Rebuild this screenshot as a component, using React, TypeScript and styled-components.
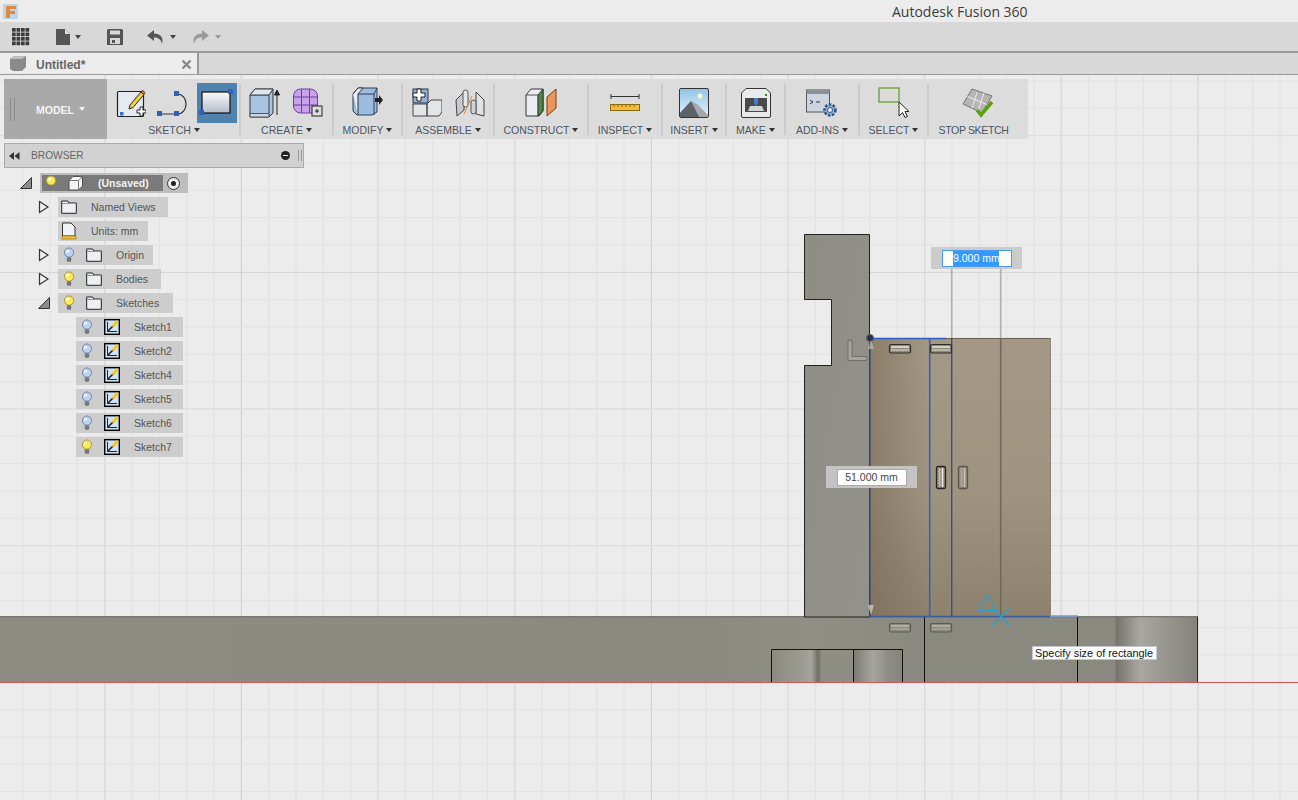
import React from 'react';
import styled, { createGlobalStyle } from 'styled-components';

const GlobalStyle = createGlobalStyle`
  html, body { margin: 0; padding: 0; background: #ececec; overflow: hidden; }
  body { font-family: "Liberation Sans", Arial, sans-serif; }
`;

const Page = styled.div`
  width: 1298px;
  height: 800px;
  display: flex;
  flex-direction: column;
  overflow: hidden;
`;

const TitleBar = styled.div`
  height: 22px;
  flex: none;
  background: #ececec;
  display: flex;
  align-items: center;
  padding-left: 3px;
`;

const AppTitle = styled.div`
  margin-left: 874px;
  font-family: "Open Sans", sans-serif;
  font-size: 14px;
  color: #3c3c3c;
  white-space: nowrap;
`;

const QuickBar = styled.div`
  height: 29px;
  flex: none;
  background: #d8d8d8;
  border-bottom: 2px solid #999;
  display: flex;
  align-items: center;
`;

const QuickItem = styled.div<{ $w: number; $ml: number; $gap?: number }>`
  width: ${(p) => p.$w}px;
  margin-left: ${(p) => p.$ml}px;
  height: 20px;
  display: flex;
  align-items: center;
  gap: ${(p) => p.$gap || 0}px;
`;

const Caret = styled.span<{ $c?: string }>`
  display: inline-block;
  width: 0;
  height: 0;
  border-left: 3.5px solid transparent;
  border-right: 3.5px solid transparent;
  border-top: 4px solid ${(p) => p.$c || '#444'};
`;

const TabBar = styled.div`
  height: 21px;
  flex: none;
  display: flex;
  background: #d8d8d8;
  border-bottom: 1px solid #999;
`;

const Tab = styled.div`
  width: 199px;
  background: #ececec;
  border-right: 2px solid #999;
  display: flex;
  align-items: center;
  padding: 0 5px 0 10px;
  box-sizing: border-box;
  font-size: 12px;
  font-weight: bold;
  color: #666;
`;

const TabLabel = styled.span`
  margin: 3px 0 0 10px;
  flex: 1;
`;

const TabClose = styled.svg`
  margin-top: 2px;
`;

const Viewport = styled.div`
  position: relative;
  flex: 1;
  background: #ececec;
`;

const Scene = styled.svg`
  position: absolute;
  left: 0;
  top: -75px;
  width: 1298px;
  height: 800px;
`;

const Toolbar = styled.div`
  position: absolute;
  left: 4px;
  top: 4px;
  width: 1024px;
  height: 60px;
  background: #dcdcdc;
  display: flex;
`;

const ModelButton = styled.div`
  width: 103px;
  flex: none;
  background: #a9a9a9;
  display: flex;
  align-items: center;
  color: #f4f4f4;
  font-size: 10.5px;
  font-weight: bold;
  gap: 5px;
`;

const ModelText = styled.span`
  margin-top: 2px;
`;

const Grip = styled.div`
  width: 3px;
  height: 23px;
  margin: 0 16px 0 6px;
  border-left: 1px solid #8c8c8c;
  border-right: 1px solid #8c8c8c;
`;

const ToolGroup = styled.div<{ $w: number; $last?: boolean; $flush?: boolean }>`
  width: ${(p) => p.$w}px;
  flex: none;
  box-sizing: border-box;
  padding-right: ${(p) => (p.$flush ? 0 : 2)}px;
  position: relative;
  display: flex;
  flex-direction: column;
  align-items: center;
  &::after {
    content: '';
    display: ${(p) => (p.$last ? 'none' : 'block')};
    position: absolute;
    right: 0;
    top: 5px;
    bottom: 4px;
    width: 2px;
    background: #cbcbcb;
  }
`;

const ToolIcons = styled.div`
  height: 44px;
  display: flex;
  align-items: center;
  justify-content: center;
  gap: 3px;
`;

const ToolSlot = styled.div<{ $on?: boolean }>`
  width: 40px;
  height: 40px;
  margin-top: 4px;
  display: flex;
  align-items: center;
  justify-content: center;
  background: ${(p) => (p.$on ? '#4f83ae' : 'transparent')};
`;

const ToolLabel = styled.div<{ $last?: boolean }>`
  font-size: 10.5px;
  line-height: 12px;
  margin: 1px ${(p) => (p.$last ? 8 : 0)}px 0 0;
  letter-spacing: ${(p) => (p.$last ? -0.35 : 0)}px;
  color: #4d5563;
  display: flex;
  align-items: center;
  gap: 3px;
  white-space: nowrap;
`;

const BrowserBar = styled.div`
  position: absolute;
  left: 4px;
  top: 68px;
  width: 300px;
  height: 25px;
  box-sizing: border-box;
  background: #d2d2d2;
  border: 1px solid #aaa;
  display: flex;
  align-items: center;
  padding: 0 1px 0 4px;
  font-size: 10.2px;
  color: #666;
`;

const BrowserTitle = styled.span`
  flex: 1;
  margin-left: 11px;
`;

const MinusDot = styled.span`
  width: 9px;
  height: 9px;
  border-radius: 50%;
  background: #222;
  display: flex;
  align-items: center;
  justify-content: center;
  margin-right: 8px;
  &::after {
    content: '';
    width: 5px;
    height: 1.5px;
    background: #eee;
  }
`;

const BarGrip = styled.span`
  width: 2px;
  height: 11px;
  border-left: 1px solid #999;
  border-right: 1px solid #999;
`;

const Tree = styled.div`
  position: absolute;
  left: 20px;
  top: 98px;
  display: flex;
  flex-direction: column;
  gap: 4px;
`;

const TreeRow = styled.div<{ $indent: number }>`
  height: 20px;
  display: flex;
  align-items: center;
  margin-left: ${(p) => p.$indent}px;
`;

const Twisty = styled.div`
  width: 20px;
  height: 20px;
  flex: none;
  display: flex;
  align-items: center;
  justify-content: flex-start;
`;

const Chip = styled.div<{ $w: number }>`
  width: ${(p) => p.$w}px;
  height: 20px;
  background: #cdcdcd;
  display: flex;
  align-items: center;
  box-sizing: border-box;
  padding-left: 3px;
  font-size: 10.5px;
  color: #555;
`;

const Gap = styled.span<{ $w: number }>`
  width: ${(p) => p.$w}px;
  flex: none;
`;

const ChipText = styled.span<{ $ml: number }>`
  margin-left: ${(p) => p.$ml}px;
  white-space: nowrap;
`;

const RootName = styled.div`
  width: 121px;
  height: 16px;
  background: #7a7a7a;
  display: flex;
  align-items: center;
  padding-left: 3px;
  box-sizing: border-box;
  color: #f2f2f2;
  font-size: 10.5px;
  font-weight: bold;
`;

const RootChip = styled.div`
  height: 20px;
  width: 148px;
  background: #bdbdbd;
  display: flex;
  align-items: center;
  padding-left: 2px;
  box-sizing: border-box;
`;

const RadioDot = styled.span`
  width: 13px;
  height: 13px;
  border-radius: 50%;
  border: 1px solid #333;
  background: #eee;
  box-sizing: border-box;
  margin-left: 4px;
  display: flex;
  align-items: center;
  justify-content: center;
  &::after {
    content: '';
    width: 5px;
    height: 5px;
    border-radius: 50%;
    background: #222;
  }
`;

const DimBox = styled.div<{ $x: number; $y: number }>`
  position: absolute;
  left: ${(p) => p.$x}px;
  top: ${(p) => p.$y}px;
  width: 91px;
  height: 22px;
  background: rgba(200, 200, 200, 0.93);
  display: flex;
  align-items: center;
  justify-content: center;
`;

const DimInput = styled.div<{ $active?: boolean }>`
  width: 70px;
  height: 17px;
  box-sizing: border-box;
  background: #fff;
  border: 1px solid ${(p) => (p.$active ? '#4a9bf0' : '#aaa')};
  font-size: 10.5px;
  line-height: 15px;
  color: #444;
  text-align: center;
  display: flex;
  justify-content: center;
`;

const Selected = styled.span`
  background: #3399ff;
  color: #fff;
  width: 46px;
  margin-right: 1px;
  white-space: nowrap;
`;

const Tooltip = styled.div`
  position: absolute;
  left: 1032px;
  top: 571px;
  width: 125px;
  height: 14px;
  box-sizing: border-box;
  background: #fff;
  border: 1px solid #c4c4d0;
  font-size: 10.9px;
  line-height: 12px;
  padding-left: 2px;
  color: #111;
  white-space: nowrap;
`;

const xs = Array.from({ length: 48 }, (_, i) => 22.7 + i * 27.333);
const ys = Array.from({ length: 27 }, (_, i) => 81 + i * 27.333);

function GridLines() {
  return (
    <g>
      {xs.map((x, i) => {
        const strong = i === 8 || i === 23 || i === 43;
        const mid = (i - 8) % 5 === 0;
        return (
          <line
            key={i}
            x1={x}
            x2={x}
            y1={75}
            y2={800}
            stroke={strong ? '#cecece' : mid ? '#dadada' : '#e1e1e1'}
            strokeWidth={mid && !strong ? 1.4 : 1}
          />
        );
      })}
      {ys.map((y, i) => {
        const strong = (i - 7) % 15 === 0;
        const mid = (i - 7) % 5 === 0;
        return (
          <line
            key={i}
            y1={y}
            y2={y}
            x1={0}
            x2={1298}
            stroke={strong ? '#d2d2d2' : mid ? '#dedede' : '#e2e2e2'}
            strokeWidth={mid && !strong ? 1.4 : 1}
          />
        );
      })}
    </g>
  );
}

function HorizConstraint({ x, y, dim }: { x: number; y: number; dim?: boolean }) {
  return (
    <g transform={`translate(${x} ${y})`} opacity={dim ? 0.5 : 1}>
      <rect x={0.5} y={0.5} width={21} height={8.5} rx={1.5} fill="#8f8a7c" stroke="#2f2c26" strokeWidth={1.2} />
      <line x1={2} y1={3} x2={20} y2={3} stroke="#f0eee8" strokeWidth={1.4} />
      <path d="M2 7l1.5-2 1.5 2 1.5-2 1.5 2 1.5-2 1.5 2 1.5-2 1.5 2 1.5-2 1.5 2 1.5-2 1.5 2" stroke="#e6e3da" fill="none" strokeWidth={0.8} />
    </g>
  );
}

function VertConstraint({ x, y, dim }: { x: number; y: number; dim?: boolean }) {
  return (
    <g transform={`translate(${x} ${y})`} opacity={dim ? 0.55 : 1}>
      <rect x={0.5} y={0.5} width={9} height={22} rx={1.5} fill="#8f8a7c" stroke="#26241f" strokeWidth={1.3} />
      <line x1={6.5} y1={2} x2={6.5} y2={21} stroke="#f0eee8" strokeWidth={1.4} />
      <path d="M2.5 2.5l2 1.5-2 1.5 2 1.5-2 1.5 2 1.5-2 1.5 2 1.5-2 1.5 2 1.5-2 1.5 2 1.5-2 1.5" stroke="#e6e3da" fill="none" strokeWidth={0.8} />
    </g>
  );
}

function Model() {
  return (
    <g>
      <defs>
        <linearGradient id="tall" x1="0" y1="0" x2="1" y2="1">
          <stop offset="0" stopColor="#8f8e85" />
          <stop offset="1" stopColor="#92918b" />
        </linearGradient>
        <linearGradient id="cylA" x1="0" y1="0" x2="1" y2="0">
          <stop offset="0" stopColor="#8c8a80" />
          <stop offset="0.55" stopColor="#9a9a90" />
          <stop offset="0.8" stopColor="#a4a49c" />
          <stop offset="0.93" stopColor="#6f6f68" />
          <stop offset="1" stopColor="#8b897f" />
        </linearGradient>
        <linearGradient id="cylB" x1="0" y1="0" x2="1" y2="0">
          <stop offset="0" stopColor="#7c7b73" />
          <stop offset="0.4" stopColor="#a6a69e" />
          <stop offset="0.7" stopColor="#8f8e86" />
          <stop offset="1" stopColor="#85847b" />
        </linearGradient>
        <linearGradient id="cylC" x1="0" y1="0" x2="1" y2="0">
          <stop offset="0" stopColor="#74736b" />
          <stop offset="0.3" stopColor="#a8a8a0" />
          <stop offset="0.55" stopColor="#9a9a92" />
          <stop offset="1" stopColor="#84837a" />
        </linearGradient>
        <linearGradient id="baseFade" x1="0" y1="0" x2="1" y2="0">
          <stop offset="0" stopColor="#8d8b81" />
          <stop offset="0.6" stopColor="#8c8a80" />
          <stop offset="0.68" stopColor="#908f86" />
          <stop offset="0.78" stopColor="#8a897f" />
          <stop offset="1" stopColor="#8b8a81" />
        </linearGradient>
        <linearGradient id="brown" x1="0" y1="0" x2="0" y2="1">
          <stop offset="0" stopColor="#9e937f" />
          <stop offset="0.55" stopColor="#998e79" />
          <stop offset="1" stopColor="#877b66" />
        </linearGradient>
        <linearGradient id="brownLeft" x1="0" y1="0" x2="1" y2="0">
          <stop offset="0" stopColor="#6f5f4a" stopOpacity="0.45" />
          <stop offset="1" stopColor="#6f5f4a" stopOpacity="0" />
        </linearGradient>
      </defs>
      <rect x={0} y={617} width={1198} height={65.5} fill="url(#baseFade)" />
      <rect x={1115.5} y={617} width={82} height={65} fill="url(#cylC)" />
      <rect x={771.5} y={649.5} width={50} height={33} fill="url(#cylA)" />
      <rect x={821.5} y={649.5} width={32} height={33} fill="#8f8e85" />
      <rect x={853.5} y={649.5} width={49} height={33} fill="url(#cylB)" />
      <line x1={0} y1={616.7} x2={1198} y2={616.7} stroke="#5e5d55" />
      <line x1={1197.5} y1={617} x2={1197.5} y2={682} stroke="#2a2a28" />
      <line x1={924.5} y1={617} x2={924.5} y2={682} stroke="#111" />
      <line x1={1077.5} y1={617} x2={1077.5} y2={682} stroke="#111" />
      <path d="M771.5 682V649.5H902.5V682M853.5 649.5V682" fill="none" stroke="#111" />
      <polygon
        points="804.5,234.5 869.5,234.5 869.5,617 804.5,617 804.5,365.5 831.5,365.5 831.5,299.5 804.5,299.5"
        fill="url(#tall)"
        stroke="#222"
      />
      <rect x={870} y={338} width={180.5} height={279} fill="url(#brown)" opacity={0.94} />
      <rect x={870} y={338} width={60} height={279} fill="url(#brownLeft)" />
      <line x1={870} y1={338.5} x2={1050} y2={338.5} stroke="#6a614f" />
      <line x1={1050.5} y1={338} x2={1050.5} y2={617} stroke="#8d8471" />
      <line x1={951.7} y1={268} x2={951.7} y2={338} stroke="#b0b0b0" strokeWidth={1.6} />
      <line x1={1000.7} y1={268} x2={1000.7} y2={338} stroke="#b0b0b0" strokeWidth={1.6} />
      <line x1={1000.7} y1={338} x2={1000.7} y2={617} stroke="#6f695c" strokeWidth={1.6} />
      <line x1={951.7} y1={338} x2={951.7} y2={617} stroke="#3d4f73" strokeWidth={1.4} />
      <line x1={929.7} y1={338} x2={929.7} y2={617} stroke="#3a5fb8" strokeWidth={1.6} />
      <line x1={870} y1={338} x2={870} y2={617} stroke="#3f5378" strokeWidth={1.4} />
      <line x1={870} y1={338.5} x2={946} y2={338.5} stroke="#2f5fc4" strokeWidth={1.6} />
      <line x1={870} y1={616.5} x2={1050} y2={616.5} stroke="#3d5a9c" strokeWidth={1.4} />
      <line x1={1050} y1={616} x2={1078} y2={616} stroke="#7f9fe0" strokeWidth={1.6} />
      <circle cx={870} cy={338} r={3.6} fill="#26324a" stroke="#666" strokeWidth={1} />
      <polygon points="868,349 874,349 871,340" fill="#c9c6bd" opacity={0.6} />
      <polygon points="868,605 874,605 871,615" fill="#c9c6bd" opacity={0.8} />
      <path d="M850 342V358.5H865" fill="none" stroke="#6f6e67" strokeWidth={5} strokeLinecap="round" />
      <path d="M850 342V358.5H865" fill="none" stroke="#a5a49d" strokeWidth={3} strokeLinecap="round" />
      <HorizConstraint x={889} y={344} />
      <HorizConstraint x={930} y={344} />
      <HorizConstraint x={889} y={623} dim />
      <HorizConstraint x={930} y={623} dim />
      <VertConstraint x={936} y={466} />
      <VertConstraint x={958} y={466} dim />
      <polygon points="987.5,594.5 978.5,610.3 996.5,610.3" fill="none" stroke="#2a9fd0" strokeWidth={1.2} />
      <path d="M992 625.5L1010 608M992 608.5L1010 625.5" stroke="#2a9fd0" strokeWidth={1.2} />
      <line x1={0} y1={682.5} x2={1298} y2={682.5} stroke="#d05a5a" />
    </g>
  );
}

function Bulb({ color = 'yellow' }: { color?: 'yellow' | 'blue' }) {
  const fill = color === 'yellow' ? '#fde94c' : '#bcd2f3';
  const rim = color === 'yellow' ? '#a89a40' : '#6f86aa';
  return (
    <svg width="12" height="16" viewBox="0 0 12 16">
      <circle cx="6" cy="5.6" r="4.6" fill={fill} stroke={rim} />
      <circle cx="4.6" cy="4.2" r="1.6" fill="#fff" opacity="0.75" />
      <rect x="3.8" y="10.2" width="4.4" height="4.6" rx="1" fill="#777" />
    </svg>
  );
}

function Folder() {
  return (
    <svg width="16" height="14" viewBox="0 0 16 14">
      <path d="M.7 13.3V1h6l1.2 2h7.4v10.3z" fill="#eef0f4" stroke="#222" strokeWidth="1" />
      <line x1="1" y1="3.5" x2="15" y2="3.5" stroke="#999" />
    </svg>
  );
}

function SketchBadge() {
  return (
    <svg width="16" height="16" viewBox="0 0 16 16">
      <rect x=".7" y=".7" width="14.6" height="14.6" fill="#cfe2f5" stroke="#000" strokeWidth="1.4" />
      <path d="M3.5 3v9.5h9.5" fill="none" stroke="#222" strokeWidth="1" />
      <path d="M4 12L10 6" stroke="#222" strokeWidth="1.6" />
      <path d="M8.5 7.5L14 2" stroke="#f7c70e" strokeWidth="2.6" />
    </svg>
  );
}

function TriOpen() {
  return (
    <svg width="12" height="14" viewBox="0 0 12 14">
      <path d="M1.5 1.5L10 7l-8.5 5.5z" fill="#efefef" stroke="#333" strokeWidth="1.2" />
    </svg>
  );
}

function TriDown() {
  return (
    <svg width="12" height="12" viewBox="0 0 12 12">
      <polygon points="11.5,.5 11.5,11.5 .5,11.5" fill="#8c8c8c" stroke="#333" strokeWidth="1" />
    </svg>
  );
}

const sketchNames = ['Sketch1', 'Sketch2', 'Sketch4', 'Sketch5', 'Sketch6', 'Sketch7'];

function BrowserTree() {
  return (
    <Tree>
      <TreeRow $indent={0}>
        <Twisty><TriDown /></Twisty>
        <RootChip>
          <RootName>
            <Bulb />
            <Gap $w={11} />
            <svg width="16" height="16" viewBox="0 0 16 16">
              <path d="M1 5.5L5 1.5h9.5v9.5l-4 4H1z" fill="#f4f4f4" stroke="#555" />
              <path d="M1 5.5h9.5v9.5M10.5 5.5l4-4" fill="none" stroke="#777" />
            </svg>
            <ChipText $ml={14}>(Unsaved)</ChipText>
          </RootName>
          <RadioDot />
        </RootChip>
      </TreeRow>
      <TreeRow $indent={18}>
        <Twisty><TriOpen /></Twisty>
        <Chip $w={110}>
          <Folder />
          <ChipText $ml={14}>Named Views</ChipText>
        </Chip>
      </TreeRow>
      <TreeRow $indent={38}>
        <Chip $w={90}>
          <svg width="16" height="18" viewBox="0 0 16 18">
            <path d="M1.5 14V1h8.5l4 4v9z" fill="#f0f2f5" stroke="#333" />
            <rect x="1" y="14" width="14" height="3" fill="#f2bf3a" stroke="#8a6a10" strokeWidth=".6" />
          </svg>
          <ChipText $ml={14}>Units: mm</ChipText>
        </Chip>
      </TreeRow>
      {[
        { name: 'Origin', w: 95, bulb: 'blue' as const, tw: <TriOpen /> },
        { name: 'Bodies', w: 103, bulb: 'yellow' as const, tw: <TriOpen /> },
        { name: 'Sketches', w: 115, bulb: 'yellow' as const, tw: <TriDown /> },
      ].map((r) => (
        <TreeRow key={r.name} $indent={18}>
          <Twisty>{r.tw}</Twisty>
          <Chip $w={r.w}>
            <Gap $w={2} />
            <Bulb color={r.bulb} />
            <Gap $w={11} />
            <Folder />
            <ChipText $ml={14}>{r.name}</ChipText>
          </Chip>
        </TreeRow>
      ))}
      {sketchNames.map((name, i) => (
        <TreeRow key={name} $indent={56}>
          <Chip $w={107}>
            <Gap $w={2} />
            <Bulb color={i === 5 ? 'yellow' : 'blue'} />
            <Gap $w={11} />
            <SketchBadge />
            <ChipText $ml={14}>{name}</ChipText>
          </Chip>
        </TreeRow>
      ))}
    </Tree>
  );
}

const NewSketchIcon = () => (
  <svg width="30" height="32" viewBox="0 0 30 32">
    <rect x="1.5" y="4.5" width="26" height="25" rx="1" fill="#e6eaf1" stroke="#222" strokeWidth="1.2" />
    <rect x="4" y="25" width="3.5" height="3.5" fill="#3f6fc0" />
    <path d="M14 18l11-13 3 2.5-11 13-4 1.5z" fill="#f6cf3c" stroke="#222" />
    <path d="M25 5l3 2.5 1-2L26.5 3z" fill="#e0704a" stroke="#222" strokeWidth=".6" />
    <path d="M21 23h3v-3h3v3h3v3h-3v3h-3v-3h-3z" fill="#fff" stroke="#222" />
  </svg>
);

const CurveIcon = () => (
  <svg width="34" height="30" viewBox="0 0 34 30">
    <path d="M3 26H20M20 26C32 26 32 6 20 6" fill="none" stroke="#333" strokeWidth="1.2" />
    <rect x="0" y="23" width="5" height="5" fill="#2e62b8" />
    <rect x="17" y="23" width="5" height="5" fill="#2e62b8" />
    <rect x="17" y="3" width="5" height="5" fill="#2e62b8" />
  </svg>
);

const RectIcon = () => (
  <svg width="36" height="30" viewBox="0 0 36 30">
    <defs>
      <linearGradient id="rectG" x1="0" y1="0" x2="0" y2="1">
        <stop offset="0" stopColor="#fafafa" />
        <stop offset="1" stopColor="#b4bcc9" />
      </linearGradient>
    </defs>
    <rect x="3" y="4" width="28" height="21" fill="url(#rectG)" stroke="#111" strokeWidth="1.2" />
    <rect x="0" y="22" width="5" height="5" fill="#2e62b8" />
    <rect x="29" y="1" width="5" height="5" fill="#2e62b8" />
  </svg>
);

const ExtrudeIcon = () => (
  <svg width="32" height="32" viewBox="0 0 32 32">
    <path d="M1 8L6 2H24V26L20 30H1z" fill="#a9c4e2" stroke="#333" />
    <path d="M1 8H20V30M20 8L24 2" fill="none" stroke="#444" />
    <path d="M1 8L6 2H24L20 8z" fill="#dce7f3" stroke="#444" />
    <path d="M1 26.5H20V30H1z" fill="#cfd6df" stroke="#555" />
    <path d="M28 28V5M25.5 8L28 3l2.5 5z" stroke="#222" fill="#222" />
  </svg>
);

const FormIcon = () => (
  <svg width="32" height="32" viewBox="0 0 32 32">
    <rect x="1.5" y="2" width="24" height="24" rx="7" fill="#c9a3ea" stroke="#6a3fa0" />
    <path d="M1.5 10h24M1.5 18h24M9.5 2v24M17.5 2v24" stroke="#6a3fa0" fill="none" />
    <rect x="20" y="19" width="10" height="10" fill="#ddd" stroke="#222" />
    <path d="M23 24h4M25 22v4" stroke="#222" />
  </svg>
);

const ModifyIcon = () => (
  <svg width="32" height="32" viewBox="0 0 32 32">
    <path d="M1 7L6 1H25V25L20 28H5L1 24z" fill="#9dbde0" stroke="#2f3f55" />
    <path d="M1 7L6 1H11L6 7V28" fill="#e8edf2" stroke="#333" />
    <path d="M6 7H22V28M22 7L25 1" fill="none" stroke="#2f3f55" />
    <path d="M23 11h4v-3l4 5-4 5v-3h-4z" fill="#222" />
  </svg>
);

const AssembleIcon = () => (
  <svg width="30" height="30" viewBox="0 0 30 30">
    <rect x="1" y="1" width="15" height="14" fill="#8fb2dc" stroke="#333" />
    <path d="M1 16h14v12H1zM15 16l4-4h11v12l-3 4H15z" fill="#e3e5e8" stroke="#444" />
    <path d="M5 1h4v4h4v4H9v4H5V9H1V5h4z" fill="#fff" stroke="#222" />
  </svg>
);

const JointIcon = () => (
  <svg width="30" height="30" viewBox="0 0 30 30">
    <path d="M1 12L9 4V22L2 28z" fill="#c7cbd0" stroke="#444" />
    <rect x="8" y="2" width="5" height="17" rx="2.5" fill="#e6e6e6" stroke="#555" />
    <path d="M29 12L21 4V26l8 2z" fill="#dfe2e6" stroke="#444" />
    <rect x="16" y="12" width="5" height="14" rx="2.5" fill="#cfd2d6" stroke="#555" />
    <path d="M17 8L9 26" stroke="#e8833a" />
  </svg>
);

const ConstructIcon = () => (
  <svg width="32" height="30" viewBox="0 0 32 30">
    <path d="M1 7L6 1H18V23L14 28H1z" fill="#ecedf0" stroke="#333" />
    <path d="M13 7L18 1V23L13 28z" fill="#4d8a3f" stroke="#333" />
    <path d="M1 7H13V28" fill="none" stroke="#555" />
    <path d="M22 9L31 1V20L22 28z" fill="#e9985a" stroke="#7a3d12" />
  </svg>
);

const MeasureIcon = () => (
  <svg width="30" height="20" viewBox="0 0 30 20">
    <path d="M1 1V6M1 3.5H29M29 1V6" stroke="#333" fill="none" />
    <rect x=".5" y="11.5" width="29" height="6" fill="#f3bc38" stroke="#8a6a10" />
    <path d="M4 12v2M8 12v2M12 12v2M16 12v2M20 12v2M24 12v2" stroke="#8a6a10" />
  </svg>
);

const InsertIcon = () => (
  <svg width="30" height="30" viewBox="0 0 30 30">
    <defs>
      <linearGradient id="skyG" x1="0" y1="0" x2="0" y2="1">
        <stop offset="0" stopColor="#8fc4ea" />
        <stop offset="1" stopColor="#e9f3fa" />
      </linearGradient>
    </defs>
    <rect x=".5" y=".5" width="29" height="29" rx="1.5" fill="url(#skyG)" stroke="#333" />
    <circle cx="21" cy="8" r="2.5" fill="#fff6bf" />
    <path d="M1 25L12 13l6 3 11 11v2H1z" fill="#a5a8ad" />
    <path d="M1 25L12 13l8 16H1z" fill="#5e6269" />
  </svg>
);

const MakeIcon = () => (
  <svg width="30" height="30" viewBox="0 0 30 30">
    <path d="M5 .5H25L29.5 5V28a1.5 1.5 0 0 1-1.5 1.5H2A1.5 1.5 0 0 1 .5 28V5z" fill="#eaeaea" stroke="#333" />
    <rect x="4" y="10" width="22" height="14" fill="#4a4a4a" />
    <path d="M7 23l2-5h12l2 5z" fill="#d4d4d4" />
    <path d="M13 10h4v5l-2 3-2-3z" fill="#4a7fcc" />
    <rect x="24" y="6" width="2" height="2" fill="#2a8a2a" />
  </svg>
);

const AddInsIcon = () => (
  <svg width="32" height="30" viewBox="0 0 32 30">
    <rect x=".5" y="2" width="23" height="22" fill="#cfd5e0" stroke="#555" />
    <rect x=".5" y="2" width="23" height="4" fill="#8a8f98" />
    <path d="M4 12l3 2-3 2M10 14h4" stroke="#333" fill="none" />
    <circle cx="24" cy="22" r="5.5" fill="#8fb2dc" stroke="#33507f" strokeWidth="2.5" strokeDasharray="2.5 1.5" />
    <circle cx="24" cy="22" r="2.5" fill="#eef" stroke="#33507f" />
  </svg>
);

const SelectIcon = () => (
  <svg width="32" height="32" viewBox="0 0 32 32">
    <rect x="1" y="1" width="20" height="14" fill="none" stroke="#5f9a1e" strokeWidth="1.2" />
    <path d="M21 15V29l3.5-3.5 2.5 5 2.5-1-2.5-5H31z" fill="#fff" stroke="#222" />
  </svg>
);

const StopSketchIcon = () => (
  <svg width="32" height="30" viewBox="0 0 32 30">
    <path d="M10 1L30 8 20 25 1 16z" fill="#b5b5b5" stroke="#777" />
    <path d="M5.5 8.5L25 16.5M15 4.5L10 20M22 5L16 23" stroke="#eee" />
    <path d="M15 22l4 5L30 14" fill="none" stroke="#5ea00c" strokeWidth="3.5" />
  </svg>
);

const tools = [
  { label: 'SKETCH', w: 134, flush: true, icons: [<NewSketchIcon key="a" />, <CurveIcon key="b" />, <RectIcon key="c" />], on: 2 },
  { label: 'CREATE', w: 93, icons: [<ExtrudeIcon key="a" />, <FormIcon key="b" />] },
  { label: 'MODIFY', w: 69, icons: [<ModifyIcon key="a" />] },
  { label: 'ASSEMBLE', w: 92, icons: [<AssembleIcon key="a" />, <JointIcon key="b" />] },
  { label: 'CONSTRUCT', w: 94, icons: [<ConstructIcon key="a" />] },
  { label: 'INSPECT', w: 74, icons: [<MeasureIcon key="a" />] },
  { label: 'INSERT', w: 64, icons: [<InsertIcon key="a" />] },
  { label: 'MAKE', w: 59, icons: [<MakeIcon key="a" />] },
  { label: 'ADD-INS', w: 74, icons: [<AddInsIcon key="a" />] },
  { label: 'SELECT', w: 69, icons: [<SelectIcon key="a" />] },
  { label: 'STOP SKETCH', w: 99, icons: [<StopSketchIcon key="a" />], last: true },
];

export default function App() {
  return (
    <Page>
      <GlobalStyle />
      <TitleBar>
        <svg width="15" height="15" viewBox="0 0 15 15">
          <rect width="15" height="15" fill="#bcd6ea" />
          <path d="M3 2h10v3H7v2h5v3H7v4H3z" fill="#e8873a" />
        </svg>
        <AppTitle>Autodesk Fusion 360</AppTitle>
      </TitleBar>
      <QuickBar>
        <QuickItem $w={18} $ml={12}>
          <svg width="18" height="18" viewBox="0 0 18 18">
            {[0, 1, 2, 3].flatMap((r) =>
              [0, 1, 2, 3].map((c) => <rect key={`${r}${c}`} x={c * 4.5} y={r * 4.5} width={3.7} height={3.7} fill="#3c3c3c" />)
            )}
          </svg>
        </QuickItem>
        <QuickItem $w={32} $ml={26} $gap={5}>
          <svg width="14" height="16" viewBox="0 0 14 16">
            <path d="M0 0H9L14 5V16H0z" fill="#555" />
            <path d="M9 0V5H14" fill="#ddd" />
          </svg>
          <Caret />
        </QuickItem>
        <QuickItem $w={16} $ml={19}>
          <svg width="16" height="16" viewBox="0 0 16 16">
            <path d="M0 1.5A1.5 1.5 0 0 1 1.5 0H14.5A1.5 1.5 0 0 1 16 1.5V16H0z" fill="#555" />
            <rect x="3" y="1.5" width="10" height="4" fill="#d8d8d8" />
            <rect x="3" y="9" width="10" height="6" fill="#d8d8d8" />
            <rect x="5" y="11" width="3" height="3" fill="#555" />
          </svg>
        </QuickItem>
        <QuickItem $w={32} $ml={24} $gap={6}>
          <svg width="17" height="14" viewBox="0 0 17 14">
            <path d="M7 0L0 5.5 7 11V7.5C11 7.5 14 9 15 14 17 7 13 3.5 7 3.5z" fill="#555" />
          </svg>
          <Caret />
        </QuickItem>
        <QuickItem $w={32} $ml={13} $gap={6}>
          <svg width="17" height="14" viewBox="0 0 17 14">
            <path d="M10 0L17 5.5 10 11V7.5C6 7.5 3 9 2 14 0 7 4 3.5 10 3.5z" fill="#9a9a9a" />
          </svg>
          <Caret $c="#9a9a9a" />
        </QuickItem>
      </QuickBar>
      <TabBar>
        <Tab>
          <svg width="16" height="17" viewBox="0 0 16 17">
            <path d="M0 4L4 1H16V12L12 16H3L0 14z" fill="#8a8a8a" />
            <path d="M0 4L4 1H16L12 4z" fill="#bdbdbd" />
          </svg>
          <TabLabel>Untitled*</TabLabel>
          <TabClose width="11" height="11" viewBox="0 0 11 11">
            <path d="M1.5 1.5l8 8M9.5 1.5l-8 8" stroke="#888" strokeWidth="2.4" />
          </TabClose>
        </Tab>
      </TabBar>
      <Viewport>
        <Scene viewBox="0 0 1298 800">
          <GridLines />
          <Model />
        </Scene>
        <Toolbar>
          <ModelButton>
            <Grip />
            <ModelText>MODEL</ModelText>
            <Caret $c="#f4f4f4" />
          </ModelButton>
          {tools.map((t) => (
            <ToolGroup key={t.label} $w={t.w} $last={t.last} $flush={t.flush}>
              <ToolIcons>
                {t.icons.map((ic, i) => (
                  <ToolSlot key={i} $on={t.on === i}>{ic}</ToolSlot>
                ))}
              </ToolIcons>
              <ToolLabel $last={t.last}>
                {t.label}
                {!t.last && <Caret $c="#333" />}
              </ToolLabel>
            </ToolGroup>
          ))}
        </Toolbar>
        <BrowserBar>
          <svg width="11" height="8" viewBox="0 0 11 8">
            <path d="M5 0v8L0 4zM10.5 0v8l-5-4z" fill="#333" />
          </svg>
          <BrowserTitle>BROWSER</BrowserTitle>
          <MinusDot />
          <BarGrip />
        </BrowserBar>
        <BrowserTree />
        <DimBox $x={931} $y={172}>
          <DimInput $active>
            <Selected>9.000 mm</Selected>
          </DimInput>
        </DimBox>
        <DimBox $x={826} $y={391}>
          <DimInput>51.000 mm</DimInput>
        </DimBox>
        <Tooltip>Specify size of rectangle</Tooltip>
      </Viewport>
    </Page>
  );
}
